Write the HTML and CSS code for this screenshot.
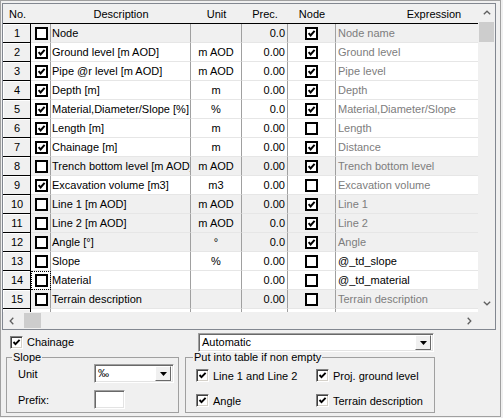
FILE: index.html
```html
<!DOCTYPE html>
<html>
<head>
<meta charset="utf-8">
<title>Columns</title>
<link rel="stylesheet" href="styles.css">
</head>
<body>
<svg class="defs" width="0" height="0" aria-hidden="true">
  <symbol id="on" viewBox="0 0 13 13">
    <rect x="1" y="1" width="11" height="11" fill="#fff" stroke="#000" stroke-width="2" shape-rendering="crispEdges"/>
    <path d="M3.6 6.2 L5.6 8.4 L9.6 3.8" fill="none" stroke="#000" stroke-width="2"/>
  </symbol>
  <symbol id="off" viewBox="0 0 13 13">
    <rect x="1" y="1" width="11" height="11" fill="#fff" stroke="#000" stroke-width="2" shape-rendering="crispEdges"/>
  </symbol>
  <symbol id="tick" viewBox="0 0 9 9">
    <path d="M1.5 4 L3.5 6.2 L7.6 1.8" fill="none" stroke="#000" stroke-width="1.9"/>
  </symbol>
  <symbol id="up" viewBox="0 0 8 5"><path d="M0.8 4.3 L4 1.2 L7.2 4.3" fill="none" stroke="#606060" stroke-width="1.3"/></symbol>
  <symbol id="down" viewBox="0 0 8 5"><path d="M0.8 0.7 L4 3.8 L7.2 0.7" fill="none" stroke="#606060" stroke-width="1.3"/></symbol>
  <symbol id="left" viewBox="0 0 5 8"><path d="M4.3 0.8 L1.2 4 L4.3 7.2" fill="none" stroke="#606060" stroke-width="1.3"/></symbol>
  <symbol id="right" viewBox="0 0 5 8"><path d="M0.7 0.8 L3.8 4 L0.7 7.2" fill="none" stroke="#606060" stroke-width="1.3"/></symbol>
  <symbol id="tri" viewBox="0 0 7 4"><path d="M0 0 H7 L3.5 4 Z" fill="#000"/></symbol>
</svg>

<div class="frame">
  <div class="grid">
    <div class="viewport">
      <div class="row thead">
        <div class="h h-no">No.</div>
        <div class="h"></div>
        <div class="h c">Description</div>
        <div class="h c">Unit</div>
        <div class="h c">Prec.</div>
        <div class="h c">Node</div>
        <div class="h c">Expression</div>
      </div>

      <div class="row trow dim">
        <div class="no">1</div>
        <div class="chk"><svg class="cb"><use href="#off"/></svg></div>
        <div class="desc">Node</div>
        <div class="unit"></div>
        <div class="prec">0.0</div>
        <div class="node"><svg class="cb"><use href="#on"/></svg></div>
        <div class="expr gray">Node name</div>
      </div>
      <div class="row trow">
        <div class="no">2</div>
        <div class="chk"><svg class="cb"><use href="#on"/></svg></div>
        <div class="desc">Ground level [m AOD]</div>
        <div class="unit">m AOD</div>
        <div class="prec">0.00</div>
        <div class="node"><svg class="cb"><use href="#on"/></svg></div>
        <div class="expr gray">Ground level</div>
      </div>
      <div class="row trow">
        <div class="no">3</div>
        <div class="chk"><svg class="cb"><use href="#on"/></svg></div>
        <div class="desc">Pipe @r level [m AOD]</div>
        <div class="unit">m AOD</div>
        <div class="prec">0.00</div>
        <div class="node"><svg class="cb"><use href="#on"/></svg></div>
        <div class="expr gray">Pipe level</div>
      </div>
      <div class="row trow">
        <div class="no">4</div>
        <div class="chk"><svg class="cb"><use href="#on"/></svg></div>
        <div class="desc">Depth [m]</div>
        <div class="unit">m</div>
        <div class="prec">0.00</div>
        <div class="node"><svg class="cb"><use href="#on"/></svg></div>
        <div class="expr gray">Depth</div>
      </div>
      <div class="row trow">
        <div class="no">5</div>
        <div class="chk"><svg class="cb"><use href="#on"/></svg></div>
        <div class="desc">Material,Diameter/Slope [%]</div>
        <div class="unit">%</div>
        <div class="prec">0.0</div>
        <div class="node"><svg class="cb"><use href="#on"/></svg></div>
        <div class="expr gray">Material,Diameter/Slope</div>
      </div>
      <div class="row trow">
        <div class="no">6</div>
        <div class="chk"><svg class="cb"><use href="#on"/></svg></div>
        <div class="desc">Length [m]</div>
        <div class="unit">m</div>
        <div class="prec">0.00</div>
        <div class="node"><svg class="cb"><use href="#off"/></svg></div>
        <div class="expr gray">Length</div>
      </div>
      <div class="row trow">
        <div class="no">7</div>
        <div class="chk"><svg class="cb"><use href="#on"/></svg></div>
        <div class="desc">Chainage [m]</div>
        <div class="unit">m</div>
        <div class="prec">0.00</div>
        <div class="node"><svg class="cb"><use href="#on"/></svg></div>
        <div class="expr gray">Distance</div>
      </div>
      <div class="row trow dim">
        <div class="no">8</div>
        <div class="chk"><svg class="cb"><use href="#off"/></svg></div>
        <div class="desc">Trench bottom level [m AOD]</div>
        <div class="unit">m AOD</div>
        <div class="prec">0.00</div>
        <div class="node"><svg class="cb"><use href="#on"/></svg></div>
        <div class="expr gray">Trench bottom level</div>
      </div>
      <div class="row trow">
        <div class="no">9</div>
        <div class="chk"><svg class="cb"><use href="#on"/></svg></div>
        <div class="desc">Excavation volume [m3]</div>
        <div class="unit">m3</div>
        <div class="prec">0.00</div>
        <div class="node"><svg class="cb"><use href="#off"/></svg></div>
        <div class="expr gray">Excavation volume</div>
      </div>
      <div class="row trow dim">
        <div class="no">10</div>
        <div class="chk"><svg class="cb"><use href="#off"/></svg></div>
        <div class="desc">Line 1 [m AOD]</div>
        <div class="unit">m AOD</div>
        <div class="prec">0.00</div>
        <div class="node"><svg class="cb"><use href="#on"/></svg></div>
        <div class="expr gray">Line 1</div>
      </div>
      <div class="row trow dim">
        <div class="no">11</div>
        <div class="chk"><svg class="cb"><use href="#off"/></svg></div>
        <div class="desc">Line 2 [m AOD]</div>
        <div class="unit">m AOD</div>
        <div class="prec">0.0</div>
        <div class="node"><svg class="cb"><use href="#on"/></svg></div>
        <div class="expr gray">Line 2</div>
      </div>
      <div class="row trow dim">
        <div class="no">12</div>
        <div class="chk"><svg class="cb"><use href="#off"/></svg></div>
        <div class="desc">Angle [°]</div>
        <div class="unit">°</div>
        <div class="prec">0.0</div>
        <div class="node"><svg class="cb"><use href="#on"/></svg></div>
        <div class="expr gray">Angle</div>
      </div>
      <div class="row trow">
        <div class="no">13</div>
        <div class="chk"><svg class="cb"><use href="#off"/></svg></div>
        <div class="desc">Slope</div>
        <div class="unit">%</div>
        <div class="prec">0.00</div>
        <div class="node"><svg class="cb"><use href="#off"/></svg></div>
        <div class="expr">@_td_slope</div>
      </div>
      <div class="row trow">
        <div class="no">14</div>
        <div class="chk focus"><svg class="cb"><use href="#off"/></svg></div>
        <div class="desc">Material</div>
        <div class="unit"></div>
        <div class="prec">0.00</div>
        <div class="node"><svg class="cb"><use href="#off"/></svg></div>
        <div class="expr">@_td_material</div>
      </div>
      <div class="row trow dim">
        <div class="no">15</div>
        <div class="chk"><svg class="cb"><use href="#off"/></svg></div>
        <div class="desc">Terrain description</div>
        <div class="unit"></div>
        <div class="prec">0.00</div>
        <div class="node"><svg class="cb"><use href="#off"/></svg></div>
        <div class="expr gray">Terrain description</div>
      </div>
      <div class="row trow">
        <div class="no"></div>
        <div class="chk"></div>
        <div class="desc"></div>
        <div class="unit"></div>
        <div class="prec"></div>
        <div class="node"></div>
        <div class="expr"></div>
      </div>
    </div>

    <div class="vscroll">
      <div class="sbtn"><svg class="arr-v"><use href="#up"/></svg></div>
      <div class="vthumb"></div>
      <div class="track"></div>
      <div class="sbtn"><svg class="arr-v"><use href="#down"/></svg></div>
    </div>

    <div class="hscroll">
      <div class="sbtn"><svg class="arr-h"><use href="#left"/></svg></div>
      <div class="hthumb"></div>
      <div class="track"></div>
      <div class="sbtn"><svg class="arr-h"><use href="#right"/></svg></div>
    </div>
    <div class="corner"></div>
  </div>

  <div class="opts">
    <label class="check chainage"><span class="cb3"><svg class="tick"><use href="#tick"/></svg></span>Chainage</label>
    <div class="combo combo-auto"><span class="combo-text">Automatic</span><span class="combo-btn"><svg class="tri"><use href="#tri"/></svg></span></div>

    <fieldset class="group slope">
      <legend>Slope</legend>
      <div class="slope-grid">
        <span>Unit</span>
        <div class="combo combo-unit"><span class="combo-text">‰</span><span class="combo-btn"><svg class="tri"><use href="#tri"/></svg></span></div>
        <span>Prefix:</span>
        <div class="edit"></div>
      </div>
    </fieldset>

    <fieldset class="group put">
      <legend>Put into table if non empty</legend>
      <div class="put-grid">
        <label class="check"><span class="cb3"><svg class="tick"><use href="#tick"/></svg></span>Line 1 and Line 2</label>
        <label class="check"><span class="cb3"><svg class="tick"><use href="#tick"/></svg></span>Proj. ground level</label>
        <label class="check"><span class="cb3"><svg class="tick"><use href="#tick"/></svg></span>Angle</label>
        <label class="check"><span class="cb3"><svg class="tick"><use href="#tick"/></svg></span>Terrain description</label>
      </div>
    </fieldset>
  </div>
</div>
</body>
</html>
```

FILE: styles.css
```css
* { box-sizing: border-box; }
html, body { margin: 0; padding: 0; }
body {
  background: #f0f0f0;
  font-family: "Liberation Sans", Arial, sans-serif;
  font-size: 11px;
  color: #000;
  width: 503px;
  height: 418px;
  overflow: hidden;
}
.defs { display: block; width: 0; height: 0; overflow: hidden; }

.frame {
  width: 501px;
  height: 417px;
  border: 1px solid #a0a0a0;
  padding: 2px 0 0 1px;
}

/* ---------- grid ---------- */
.grid {
  width: 494px;
  height: 327px;
  border: 1px solid #828790;
  background: #fff;
  display: grid;
  grid-template-columns: 475px 17px;
  grid-template-rows: 308px 17px;
}
.viewport { overflow: hidden; background: #fff; }

.row {
  display: grid;
  grid-template-columns: 28px 20px 140px 51px 46px 48px 196px;
  width: 529px;
}
.thead {
  height: 20px;
  background: #f0f0f0;
  border-bottom: 1px solid #000;
}
.h { line-height: 19px; padding-top: 1px; white-space: nowrap; overflow: hidden; }
.h-no { padding-left: 6px; }
.c { text-align: center; }

.trow { height: 19px; }
.trow > div {
  border-bottom: 1px solid #e6e6e6;
  line-height: 18px;
  white-space: nowrap;
  overflow: hidden;
}
.trow.dim { background: #f0f0f0; }

.trow > .no {
  background: #f0f0f0;
  text-align: center;
  border-right: 1px solid #000;
  border-bottom: 1px solid #000;
  box-shadow: inset 1px 1px #fff;
  padding-left: 1px;
}
.trow > .chk, .trow > .desc, .trow > .unit, .trow > .prec, .trow > .node {
  border-right: 1px solid #a0a0a0;
}
.chk, .node { display: flex; align-items: center; justify-content: center; }
.chk { padding-left: 1px; }
.desc { padding-left: 1px; }
.unit { text-align: center; }
.prec { text-align: right; padding-right: 2px; }
.expr { padding-left: 2px; }
.gray { color: #7d7d7d; }
.focus { outline: 1px dotted #000; outline-offset: -1px; }

.cb { width: 13px; height: 13px; display: block; }

/* ---------- scrollbars ---------- */
.vscroll { background: #f0f0f0; display: flex; flex-direction: column; }
.hscroll { background: #f0f0f0; display: flex; }
.sbtn { flex: none; width: 17px; height: 17px; display: flex; align-items: center; justify-content: center; }
.track { flex: 1; }
.vthumb { flex: none; height: 20px; margin: 1px 1px 0; background: #cdcdcd; }
.hthumb { flex: none; width: 17px; margin: 1px 0 1px 4px; background: #cdcdcd; }
.arr-v { width: 8px; height: 5px; display: block; }
.arr-h { width: 5px; height: 8px; display: block; }
.corner { background: #f0f0f0; }

/* ---------- options ---------- */
.opts {
  display: grid;
  grid-template-columns: 183px 250px;
  grid-template-rows: 20px auto;
  margin-top: 2px;
}
.check { display: flex; align-items: center; gap: 4px; white-space: nowrap; }
.chainage { padding-left: 8px; }
.cb3 {
  flex: none;
  width: 13px;
  height: 13px;
  background: #fff;
  border: 1px solid;
  border-color: #808080 #fff #fff #808080;
  box-shadow: inset 1px 1px #404040, inset -1px -1px #d4d0c8;
  display: flex;
  align-items: center;
  justify-content: center;
}
.tick { width: 9px; height: 9px; display: block; }

.combo {
  height: 19px;
  background: #fff;
  border: 1px solid;
  border-color: #a0a0a0 #fff #fff #a0a0a0;
  box-shadow: inset 1px 1px #696969, inset -1px -1px #e3e3e3;
  display: flex;
  align-items: center;
  padding: 2px;
}
.combo-auto { margin: 1px 0 0 13px; width: 236px; }
.combo-text { flex: 1; padding-left: 1px; line-height: 15px; }
.combo-btn {
  flex: none;
  width: 16px;
  height: 15px;
  background: #f0f0f0;
  border: 1px solid;
  border-color: #fff #696969 #696969 #fff;
  display: flex;
  align-items: center;
  justify-content: center;
}
.tri { width: 7px; height: 4px; display: block; }

.group {
  margin: -1px 0 0 0;
  border: 1px solid #a0a0a0;
  height: 62px;
  min-width: 0;
}
.group legend { padding: 0 1px; line-height: 13px; }
.slope { margin-left: 4px; width: 173px; padding: 0 0 0 11px; }
.slope legend { margin-left: -6px; }
.put { width: 250px; padding: 0 0 0 10px; }
.put legend { margin-left: -3px; }

.slope-grid {
  display: grid;
  grid-template-columns: 76px 80px;
  grid-template-rows: 19px 19px;
  row-gap: 7px;
  align-items: center;
}
.combo-unit { width: 80px; }
.edit {
  width: 31px;
  height: 19px;
  background: #fff;
  border: 1px solid;
  border-color: #a0a0a0 #fff #fff #a0a0a0;
  box-shadow: inset 1px 1px #696969, inset -1px -1px #e3e3e3;
}
.put-grid {
  display: grid;
  grid-template-columns: 120px 120px;
  grid-template-rows: 19px 19px;
  row-gap: 6px;
  margin-top: 2px;
}
```
